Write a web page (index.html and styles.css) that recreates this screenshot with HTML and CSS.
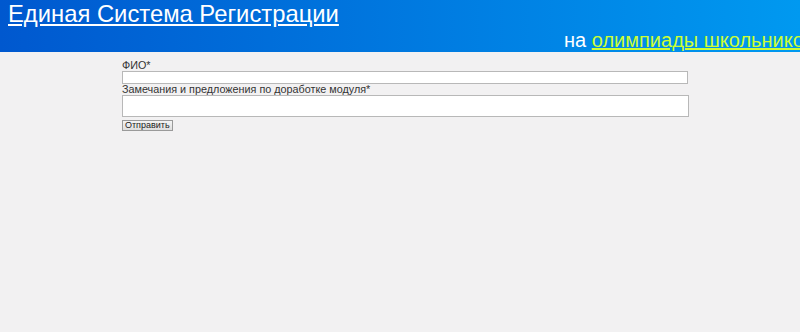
FILE: index.html
```html
<!DOCTYPE html>
<html>
<head>
<meta charset="utf-8">
<link rel="stylesheet" href="styles.css">
</head>
<body>
<div class="header">
  <div class="title"><a href="#">Единая Система Регистрации</a></div>
  <div class="subtitle">на <a href="#">олимпиады школьников</a></div>
</div>
<form class="form">
  <label class="label">ФИО*</label>
  <input class="field" type="text">
  <label class="label">Замечания и предложения по доработке модуля*</label>
  <textarea class="area"></textarea>
  <div class="actions"><button class="btn" type="button">Отправить</button></div>
</form>
</body>
</html>
```
FILE: styles.css
```css
html, body {
  margin: 0;
  padding: 0;
  background: #f2f1f2;
  font-family: "Liberation Sans", Arial, sans-serif;
  overflow: hidden;
}
.header {
  height: 52px;
  background: linear-gradient(to right, #0058cf, #0099f0);
  overflow: hidden;
}
.title {
  padding: 0 0 0 8px;
  height: 28px;
  line-height: 28px;
  font-size: 23.8px;
}
.title a {
  color: #fff;
  text-decoration: underline;
}
.subtitle {
  padding-left: 564px;
  white-space: nowrap;
  font-size: 20px;
  line-height: 24px;
  color: #fff;
}
.subtitle a {
  color: #ccff33;
  text-decoration: underline;
}
.form {
  margin: 8px 0 0 122px;
  width: 567px;
  display: flex;
  flex-direction: column;
}
.label {
  font-size: 10.8px;
  line-height: 11px;
  color: #333;
}
.field {
  margin: 0;
  box-sizing: border-box;
  width: 566px;
  height: 13px;
  border: 1px solid #b8b8b8;
  background: #fff;
  padding: 0;
  display: block;
}
.area {
  margin: 0;
  box-sizing: border-box;
  width: 567px;
  height: 22px;
  border: 1px solid #b8b8b8;
  background: #fff;
  padding: 0;
  resize: none;
  display: block;
  margin-bottom: 3px;
}
.actions {
  display: flex;
}
.btn {
  font-family: "Liberation Sans", Arial, sans-serif;
  font-size: 9px;
  padding: 0 2px;
  height: 11px;
  line-height: 9px;
  border: 1px solid #9a9a9a;
  background: linear-gradient(#f4f4f4, #dedede);
  color: #222;
}
```
